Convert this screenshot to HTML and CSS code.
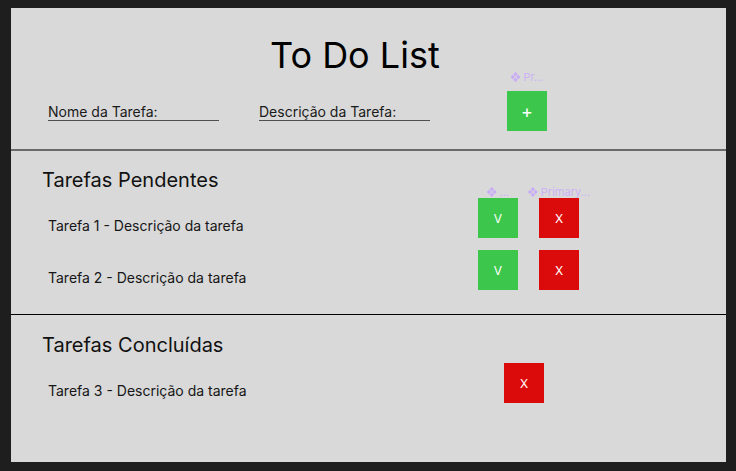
FILE: index.html
```html
<!DOCTYPE html>
<html lang="pt">
<head>
<meta charset="utf-8">
<title>To Do List</title>
<link rel="stylesheet" href="styles.css">
</head>
<body>
<div class="frame">
  <header class="top">
    <h1 class="title">To Do List</h1>
    <div class="form-row">
      <div class="field field-name">Nome da Tarefa:</div>
      <div class="field field-desc">Descrição da Tarefa:</div>
      <div class="btn-wrap btn-add-wrap">
        <span class="tag tag-add"><svg class="tag-icon" viewBox="0 0 10 10"><polygon points="5,0 7.2,2.2 5,4.4 2.8,2.2"/><polygon points="0,5 2.2,2.8 4.4,5 2.2,7.2"/><polygon points="10,5 7.8,2.8 5.6,5 7.8,7.2"/><polygon points="5,10 7.2,7.8 5,5.6 2.8,7.8"/></svg>Pr...</span>
        <button class="btn btn-green btn-plus">+</button>
      </div>
    </div>
  </header>

  <section class="section pending">
    <h2 class="heading">Tarefas Pendentes</h2>
    <div class="row">
      <span class="task">Tarefa 1 - Descrição da tarefa</span>
      <div class="btn-wrap">
        <span class="tag"><svg class="tag-icon" viewBox="0 0 10 10"><polygon points="5,0 7.2,2.2 5,4.4 2.8,2.2"/><polygon points="0,5 2.2,2.8 4.4,5 2.2,7.2"/><polygon points="10,5 7.8,2.8 5.6,5 7.8,7.2"/><polygon points="5,10 7.2,7.8 5,5.6 2.8,7.8"/></svg>...</span>
        <button class="btn btn-green">V</button>
      </div>
      <div class="btn-wrap">
        <span class="tag"><svg class="tag-icon" viewBox="0 0 10 10"><polygon points="5,0 7.2,2.2 5,4.4 2.8,2.2"/><polygon points="0,5 2.2,2.8 4.4,5 2.2,7.2"/><polygon points="10,5 7.8,2.8 5.6,5 7.8,7.2"/><polygon points="5,10 7.2,7.8 5,5.6 2.8,7.8"/></svg>Primary...</span>
        <button class="btn btn-red">X</button>
      </div>
    </div>
    <div class="row">
      <span class="task">Tarefa 2 - Descrição da tarefa</span>
      <div class="btn-wrap"><button class="btn btn-green">V</button></div>
      <div class="btn-wrap"><button class="btn btn-red">X</button></div>
    </div>
  </section>

  <section class="section done">
    <h2 class="heading">Tarefas Concluídas</h2>
    <div class="row">
      <span class="task task-done">Tarefa 3 - Descrição da tarefa</span>
      <div class="btn-wrap"><button class="btn btn-red">X</button></div>
    </div>
  </section>
</div>
</body>
</html>
```

FILE: styles.css
```css
* { box-sizing: border-box; }

html, body {
  margin: 0;
  background: #1e1e1e;
}

body {
  padding: 8px 10px 9px 11px;
  font-family: Inter, "Noto Sans", "Liberation Sans", sans-serif;
  color: #111;
}

.frame {
  width: 715px;
  height: 454px;
  background: #d9d9d9;
  display: flex;
  flex-direction: column;
}

.top {
  padding: 25px 0 18px 0;
  border-bottom: 2px solid #6b6b6b;
}

.title {
  margin: 0;
  padding-left: 259px;
  font-size: 36px;
  line-height: 44px;
  font-weight: 400;
  color: #000;
}

.form-row {
  margin-top: 14px;
  display: flex;
  align-items: flex-start;
  padding-left: 37px;
}

.field {
  width: 171px;
  padding-top: 12px;
  font-size: 14px;
  line-height: 17px;
  border-bottom: 1px solid #4f4f4f;
  color: #1a1a1a;
}

.field-desc { margin-left: 40px; }

.btn-add-wrap { margin-left: 77px; }

.btn-wrap {
  position: relative;
  width: 40px;
  height: 40px;
  flex: none;
}

.btn {
  display: flex;
  align-items: center;
  justify-content: center;
  width: 40px;
  height: 40px;
  border: 0;
  padding: 0;
  margin: 0;
  font-family: Inter, "Noto Sans", "Liberation Sans", sans-serif;
  font-size: 12px;
  color: #fff;
  cursor: pointer;
}

.btn-plus { font-size: 18px; }

.btn-green { background: #3cc74c; }
.btn-red { background: #dc0b0b; }

.tag {
  position: absolute;
  left: 50%;
  top: -12px;
  transform: translateX(-50%);
  display: flex;
  align-items: center;
  gap: 3px;
  white-space: nowrap;
  font-size: 11px;
  line-height: 12px;
  color: #cdb2f7;
}

.tag-add { top: -20px; }

.tag-icon {
  width: 10px;
  height: 10px;
  fill: #c9acf6;
}

.section {
  padding: 17px 0 0 31px;
}

.pending {
  padding-bottom: 24px;
  border-bottom: 1px solid #000;
}

.done {
  padding-top: 18px;
  flex: 1;
}

.heading {
  margin: 0 0 6px 0;
  font-size: 20px;
  line-height: 24px;
  font-weight: 400;
  color: #111;
}

.row {
  display: flex;
  align-items: flex-start;
  height: 40px;
  margin-bottom: 12px;
}

.row:last-child { margin-bottom: 0; }

.task {
  width: 436px;
  padding-left: 6px;
  margin-top: 18.5px;
  font-size: 14px;
  line-height: 17px;
  color: #161616;
}

.task-done { width: 462px; }

.row .btn-wrap + .btn-wrap { margin-left: 21px; }
```
